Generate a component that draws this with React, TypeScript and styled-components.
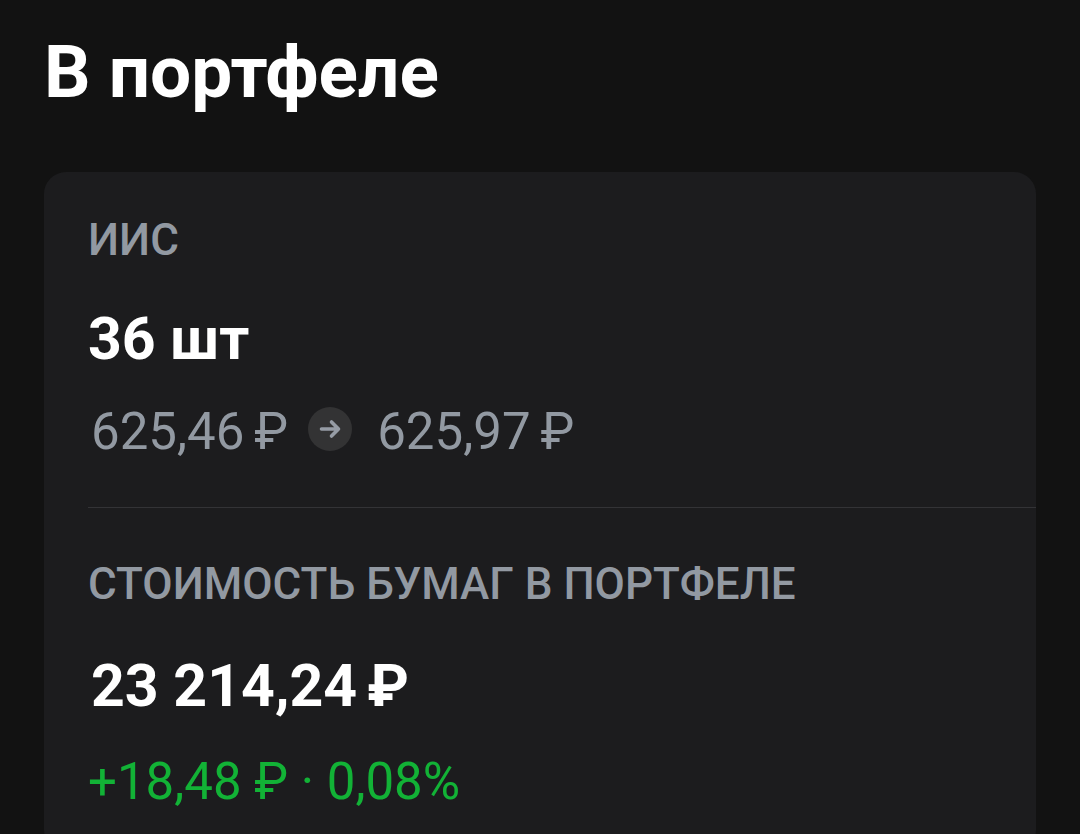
import React from "react";
import styled, { createGlobalStyle } from "styled-components";

const Global = createGlobalStyle`
  * { box-sizing: border-box; }
  body { margin: 0; background: #121212; font-family: Roboto, sans-serif; color: #fff; overflow: hidden; }
`;
const Page = styled.main`
  padding: 28px 44px 0;
`;
const Title = styled.h1`
  margin: 0 0 56px 0;
  font-size: 73px;
  line-height: 88px;
  font-weight: 700;
`;
const Card = styled.section`
  min-height: 680px;
  padding: 40px 0 24px 44px;
  border-radius: 22px;
  background: #1c1c1e;
`;
const Group = styled.div`
  & + & {
    margin-top: 43px;
    padding-top: 48px;
    border-top: 1px solid #333336;
  }
`;
const Label = styled.h2`
  margin: 0 0 37px;
  font-size: 44px;
  line-height: 56px;
  font-weight: 500;
  color: #9299a2;
  text-transform: uppercase;
`;
const Amount = styled.p<{ $money?: boolean }>`
  margin: 0 0 27px;
  font-size: 59px;
  line-height: ${(p) => (p.$money ? 74 : 68)}px;
  font-weight: 700;
`;
const Detail = styled.p<{ $gain?: boolean }>`
  display: flex;
  align-items: center;
  margin: 0;
  font-size: 51px;
  line-height: 64px;
  font-weight: 400;
  color: ${(p) => (p.$gain ? "#12b236" : "#9299a2")};
`;
const Price = styled.span`
  display: inline-flex;
  gap: 10px;
  padding-left: 3px;
`;
const Arrow = styled.svg`
  width: 44px;
  height: 44px;
  margin: 0 22px 6px 20px;
`;

export default function App() {
  return (
    <>
      <Global />
      <Page>
        <Title>В портфеле</Title>
        <Card>
          <Group>
            <Label>ИИС</Label>
            <Amount>36 шт</Amount>
            <Detail>
              <Price>
                <span>625,46</span>
                <span>₽</span>
              </Price>
              <Arrow viewBox="0 0 44 44" aria-hidden="true">
                <circle cx="22" cy="22" r="22" fill="#333334" />
                <path
                  d="M13.5 22h17M23.5 15l7 7-7 7"
                  fill="none"
                  stroke="#969ca5"
                  strokeWidth="3.6"
                  strokeLinecap="round"
                  strokeLinejoin="round"
                />
              </Arrow>
              <Price>
                <span>625,97</span>
                <span>₽</span>
              </Price>
            </Detail>
          </Group>
          <Group>
            <Label>Стоимость бумаг в портфеле</Label>
            <Amount $money>
              <Price>
                <span>23 214,24</span>
                <span>₽</span>
              </Price>
            </Amount>
            <Detail $gain>+18,48 ₽ · 0,08%</Detail>
          </Group>
        </Card>
      </Page>
    </>
  );
}
